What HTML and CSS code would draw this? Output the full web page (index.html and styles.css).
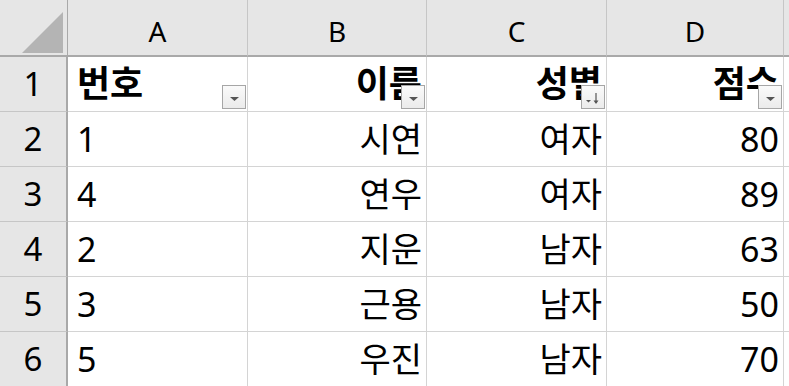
FILE: index.html
```html
<!DOCTYPE html>
<html lang="ko">
<head>
<meta charset="utf-8">
<link rel="stylesheet" href="styles.css">
</head>
<body>
<div class="sheet">
  <div class="corner">
    <svg width="67" height="56" viewBox="0 0 67 56"><polygon points="22,53 63,53 63,12" fill="#b4b4b4"/></svg>
  </div>
  <div class="colhead">A</div>
  <div class="colhead">B</div>
  <div class="colhead">C</div>
  <div class="colhead">D</div>
  <div class="colhead extra"></div>

  <div class="rowhead">1</div>
  <div class="cell bold left">번호<span class="fbtn"><svg width="22" height="22" viewBox="0 0 22 22"><polygon points="7,11 16,11 11.5,15" fill="#555"/></svg></span></div>
  <div class="cell bold right">이름<span class="fbtn"><svg width="22" height="22" viewBox="0 0 22 22"><polygon points="7,11 16,11 11.5,15" fill="#555"/></svg></span></div>
  <div class="cell bold right">성별<span class="fbtn"><svg width="22" height="22" viewBox="0 0 22 22"><polygon points="4,14 9,14 6.5,16.5" fill="#555"/><path d="M14 7 V17" stroke="#555" stroke-width="1.2"/><polygon points="11.5,14.5 16.5,14.5 14,18" fill="#555"/></svg></span></div>
  <div class="cell bold right">점수<span class="fbtn"><svg width="22" height="22" viewBox="0 0 22 22"><polygon points="7,11 16,11 11.5,15" fill="#555"/></svg></span></div>
  <div class="cell extra"></div>

  <div class="rowhead">2</div>
  <div class="cell left">1</div>
  <div class="cell right">시연</div>
  <div class="cell right">여자</div>
  <div class="cell right">80</div>
  <div class="cell extra"></div>

  <div class="rowhead">3</div>
  <div class="cell left">4</div>
  <div class="cell right">연우</div>
  <div class="cell right">여자</div>
  <div class="cell right">89</div>
  <div class="cell extra"></div>

  <div class="rowhead">4</div>
  <div class="cell left">2</div>
  <div class="cell right">지운</div>
  <div class="cell right">남자</div>
  <div class="cell right">63</div>
  <div class="cell extra"></div>

  <div class="rowhead">5</div>
  <div class="cell left">3</div>
  <div class="cell right">근용</div>
  <div class="cell right">남자</div>
  <div class="cell right">50</div>
  <div class="cell extra"></div>

  <div class="rowhead">6</div>
  <div class="cell left">5</div>
  <div class="cell right">우진</div>
  <div class="cell right">남자</div>
  <div class="cell right">70</div>
  <div class="cell extra"></div>
</div>
</body>
</html>
```
FILE: styles.css
```css
html, body {
  margin: 0;
  padding: 0;
  background: #ffffff;
  overflow: hidden;
}

.sheet {
  display: grid;
  grid-template-columns: 68px 180px 179px 180px 177px 20px;
  grid-template-rows: 57px repeat(6, 55px);
  font-family: "Noto Sans", "Noto Sans CJK KR", sans-serif;
  color: #000;
}

.corner {
  background: #e6e6e6;
  border-right: 1px solid #a9a9a9;
  border-bottom: 2px solid #a9a9a9;
  box-sizing: border-box;
  display: flex;
  align-items: flex-start;
}

.colhead {
  background: #e6e6e6;
  border-right: 1px solid #c6c6c6;
  border-bottom: 2px solid #a9a9a9;
  box-sizing: border-box;
  display: flex;
  justify-content: center;
  align-items: flex-end;
  padding-bottom: 8px;
  font-size: 28px;
  line-height: 32px;
}

.rowhead {
  background: #e6e6e6;
  border-right: 2px solid #a9a9a9;
  border-bottom: 1px solid #c6c6c6;
  box-sizing: border-box;
  display: flex;
  justify-content: center;
  align-items: center;
  font-size: 33px;
  line-height: 40px;
}

.cell {
  position: relative;
  border-right: 1px solid #d4d4d4;
  border-bottom: 1px solid #d4d4d4;
  box-sizing: border-box;
  display: flex;
  align-items: center;
  font-size: 34px;
  line-height: 40px;
  white-space: nowrap;
  overflow: hidden;
}

.left {
  justify-content: flex-start;
  padding-left: 9px;
}

.right {
  justify-content: flex-end;
  padding-right: 4px;
}

.bold {
  font-weight: 700;
  font-size: 36px;
}

.fbtn {
  position: absolute;
  right: 1px;
  bottom: 2px;
  width: 24px;
  height: 24px;
  box-sizing: border-box;
  border: 1px solid #a6a6a6;
  background: linear-gradient(#fafafa, #ebebeb);
  display: flex;
  align-items: center;
  justify-content: center;
}

.fbtn svg {
  display: block;
}
```
